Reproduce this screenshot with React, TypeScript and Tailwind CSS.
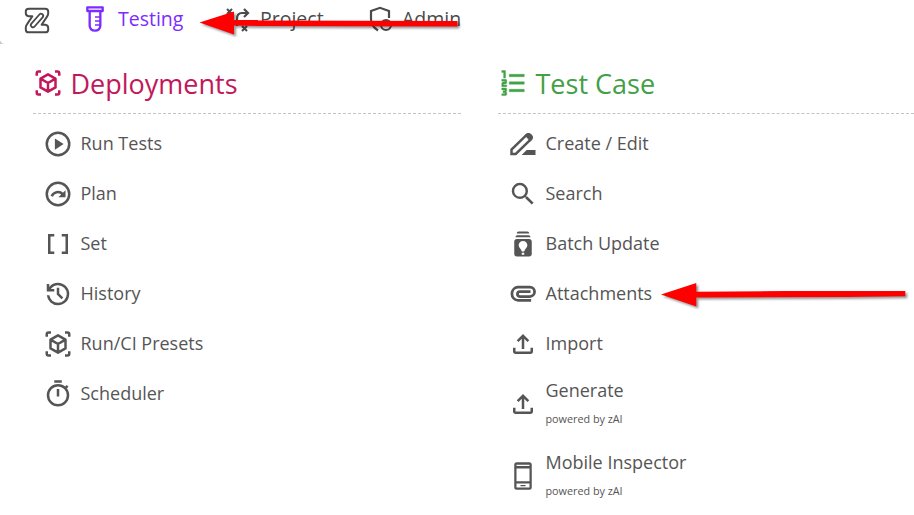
import type { ReactNode } from "react";
import { MdBatchPrediction, MdDataArray, MdSearch } from "react-icons/md";

const box = "h-[30px] w-[30px] shrink-0";

function Icon({ children }: { children: ReactNode }) {
  return (
    <svg viewBox="0 0 24 24" className={box} fill="currentColor">
      {children}
    </svg>
  );
}

const line = { fill: "none", stroke: "currentColor", strokeWidth: 2 };

const CubeScan = () => (
  <Icon>
    <g {...line}>
      <path d="M3 6.200V4.200Q3 2.800 4.400 2.800H6.400M17.600 2.800h2Q21 2.800 21 4.200v2M21 17.800v2q0 1.400-1.400 1.400h-2M6.400 21.200h-2Q3 21.200 3 19.800v-2" />
      <path strokeLinejoin="round" d="M12 5.100l6 3.400v7l-6 3.400-6-3.400V8.500zM6 8.500l6 3.500 6-3.500M12 12v6.900" />
    </g>
  </Icon>
);

const Play = () => (
  <Icon>
    <circle cx="12" cy="12" r="9" {...line} />
    <path d="M9.500 7.500v9l7-4.500z" />
  </Icon>
);

const Plan = () => (
  <Icon>
    <circle cx="12" cy="12" r="9" {...line} />
    <path d="M7 13.800A5.300 5.300 0 0 1 15.700 12" {...line} />
    <path d="M18 9v5.500h-5.700z" />
  </Icon>
);

const History = () => (
  <Icon>
    <path d="M12 21q-3.450 0-6.013-2.288T3.050 13H5.100q.35 2.600 2.313 4.300T12 19q2.925 0 4.963-2.037T19 12t-2.037-4.963T12 5q-1.725 0-3.225.8T6.250 8H9v2H3V4h2v2.350q1.275-1.600 3.113-2.475T12 3q1.875 0 3.513.713t2.850 1.924 1.925 2.850T21 12t-.712 3.513-1.925 2.850-2.850 1.925T12 21m2.800-4.800L11 12.400V7h2v4.600l3.200 3.200z" />
  </Icon>
);

const Timer = () => (
  <Icon>
    <circle cx="12" cy="13" r="8" {...line} />
    <path d="M9 1h6v2H9zM11 8h2v6h-2zM17.500 6.200l1.500-1.500 1.400 1.400-1.500 1.500z" />
  </Icon>
);

const Pencil = () => (
  <Icon>
    <path
      {...line}
      d="M2.800 19.900v-3.400L14.900 4.700q1.300-1.100 2.700 0l.8.8q1.100 1.400 0 2.700L6.200 19.900z"
    />
    <path d="M13.200 5l1.700-1.300q1.800-1.100 3.500.4l.8.8q1.400 1.700.1 3.500l-1.500 1.500zM22 16.800v4H10.900l4-4z" />
  </Icon>
);

const Clip = () => (
  <Icon>
    <path
      {...line}
      strokeWidth="2.200"
      d="M18.500 17H7.700A5.300 5.300 0 0 1 7.700 6.500H17.500a3.700 3.700 0 0 1 0 7.500H9.500a1.900 1.900 0 0 1 0-3.900H18"
    />
  </Icon>
);

const Upload = () => (
  <Icon>
    <path d="M11 16V7.850l-2.600 2.600L7 9l5-5 5 5-1.400 1.450-2.600-2.600V16zm-5 4q-.825 0-1.412-.587T4 18v-3h2v3h12v-3h2v3q0 .825-.587 1.413T18 20z" />
  </Icon>
);

const Phone = () => (
  <Icon>
    <path
      fillRule="evenodd"
      d="M7 1h10q2 0 2 2v18q0 2-2 2H7q-2 0-2-2V3q0-2 2-2zM6.800 3v.9h10.400V3zM6.800 6v10.200h10.400V6zM6.800 18v3.200h10.400V18zM10 19.200h4v1h-4z"
    />
  </Icon>
);

const Numbered = () => (
  <Icon>
    <path stroke="currentColor" strokeWidth=".3" d="M3 22v-1.500h2.500v-.75H4v-1.500h1.500v-.75H3V16h3q.425 0 .713.288T7 17v1q0 .425-.288.713T6 19q.425 0 .713.288T7 20v1q0 .425-.288.713T6 22zm0-7v-2.750q0-.425.288-.712T4 11.250h1.500v-.75H3V9h3q.425 0 .713.288T7 10v1.750q0 .425-.288.713T6 12.750H4.500v.75H7V15zm1.500-7V3.500H3V2h3v6zM9 19v-2h12v2zm0-6v-2h12v2zm0-6V5h12v2z" />
  </Icon>
);

const Logo = () => (
  <svg viewBox="0 0 78 82" className="h-[27px] w-[26px]" fill="none" stroke="currentColor" strokeWidth="6" strokeLinejoin="round">
    <path d="M14 28Q5 27 5 18V13Q5 5 14 5H64Q73 5 73 14V20Q73 25 69 30L53 54H64Q73 55 73 64V69Q73 77 64 77H14Q5 77 5 68V62Q5 57 9 52L25 28z" />
    <rect x="14" y="34.500" width="50" height="13" rx="6.500" strokeWidth="5.500" transform="rotate(-49 39 41)" />
  </svg>
);

const Tube = () => (
  <svg viewBox="0 0 54 78" className="mb-[2px] h-[26px] w-[18px]" fill="none" stroke="currentColor" strokeWidth="7" strokeLinejoin="round">
    <path d="M4 4H50V15H4zM11 15V59Q12 74 27 74Q42 74 43 59V15" />
    <path strokeWidth="5" d="M27 33H43M27 45H43M27 57H43" />
  </svg>
);

const Routes = () => (
  <svg viewBox="0 0 24 24" className="h-6 w-6" {...line}>
    <path d="M1 1l5 5M6 1L1 6M16 18l5 5M21 18l-5 5M2 18l5 5M7 18l-5 5" />
    <path strokeWidth="2.200" d="M11 18V11q0-6 5-6h6M18 1l4 4-4 4" />
  </svg>
);

const Shield = () => (
  <svg viewBox="0 0 24 26" className="mb-px h-[26px] w-6" {...line}>
    <path strokeWidth="2.200" d="M10 24.500Q3 20 3 13V5l9-3.200L21 5v7" />
    <circle cx="18" cy="19" r="5" />
    <path d="M15.500 19h5" />
  </svg>
);

type Item = { label: string; icon: ReactNode; note?: string };

const deployments: Item[] = [
  { label: "Run Tests", icon: <Play /> },
  { label: "Plan", icon: <Plan /> },
  { label: "Set", icon: <MdDataArray className={box} /> },
  { label: "History", icon: <History /> },
  { label: "Run/CI Presets", icon: <CubeScan /> },
  { label: "Scheduler", icon: <Timer /> },
];

const testCase: Item[] = [
  { label: "Create / Edit", icon: <Pencil /> },
  { label: "Search", icon: <MdSearch className={box} /> },
  { label: "Batch Update", icon: <MdBatchPrediction className={box} /> },
  { label: "Attachments", icon: <Clip /> },
  { label: "Import", icon: <Upload /> },
  { label: "Generate", icon: <Upload />, note: "powered by zAI" },
  { label: "Mobile Inspector", icon: <Phone />, note: "powered by zAI" },
];

function Section({ title, icon, color, items }: { title: string; icon: ReactNode; color: string; items: Item[] }) {
  return (
    <section>
      <h2 className={`flex h-[61px] items-center gap-[7.500px] border-b border-dashed border-[#c4c4c4] text-[27px] leading-none ${color}`}>
        {icon}
        <span>{title}</span>
      </h2>
      <ul className="pt-[5px] pl-[10px]">
        {items.map((item) => (
          <li key={item.label} className={`flex items-center gap-[7.500px] ${item.note ? "h-[70px] last:h-[74px]" : "h-[50px]"}`}>
            {item.icon}
            <div className={item.note ? "pb-px" : "pb-[2px]"}>
              <div className="text-[18px] leading-6">{item.label}</div>
              {item.note && <div className="pt-[7px] text-[10.800px] leading-5">{item.note}</div>}
            </div>
          </li>
        ))}
      </ul>
    </section>
  );
}

export default function App() {
  return (
    <div className="relative h-[515px] w-[914px] overflow-hidden bg-white font-['Open_Sans',sans-serif] text-[#555]">
      <nav className="flex h-[39px] items-center pl-6 text-[19.500px] leading-6 text-[#4a4a4a]">
        <div className="w-[62px] pt-[2px]"><Logo /></div>
        <div className="flex w-[140px] items-center gap-[14px] text-[#7c2cff]"><Tube /><span className="pb-px">Testing</span></div>
        <div className="flex w-[142px] items-center gap-[10px]"><Routes /><span className="pb-px">Project</span></div>
        <div className="flex items-center gap-[10px]"><Shield /><span className="pb-px">Admin</span></div>
      </nav>
      <div className="grid grid-cols-[428px_416px] gap-[37px] pt-[14px] pl-[33px]">
        <Section title="Deployments" icon={<CubeScan />} color="text-[#c2185b]" items={deployments} />
        <Section title="Test Case" icon={<Numbered />} color="text-[#43a047]" items={testCase} />
      </div>
      <svg viewBox="0 0 914 515" className="pointer-events-none absolute inset-0 h-full w-full" fill="#f00">
        <path fill="#c8c8c8" d="M0 40.500Q1 43 4 44H0z" />
        <g className="drop-shadow-[2px_2px_1px_rgba(0,0,0,0.4)]">
          <path d="M199.500 22.500L234 11.500V20H258V20.500L457.500 21V26.500L258 26L234 25.500V34.500z" />
          <path d="M661 294.500L696.300 283V291.700L787 291H905.300V296.300L846 297L696.300 297.500V306.500z" />
        </g>
      </svg>
    </div>
  );
}
